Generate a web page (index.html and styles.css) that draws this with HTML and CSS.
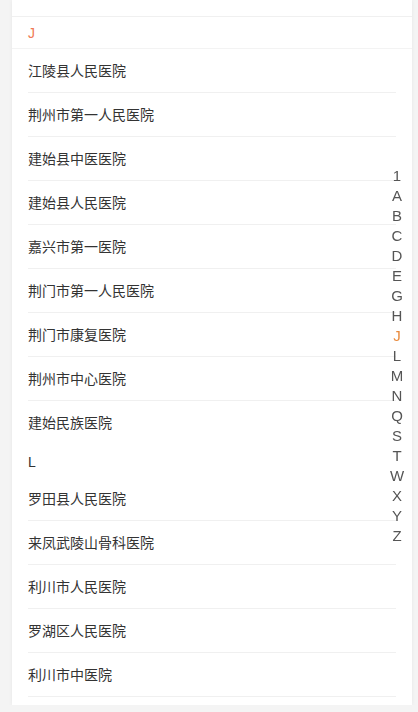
FILE: index.html
```html
<!DOCTYPE html>
<html lang="zh-CN">
<head>
    <meta charset="UTF-8">
    <meta name="viewport" content="width=device-width, initial-scale=1.0">
    <title>选择医院</title>
    <link rel="stylesheet" href="styles.css">
</head>
<body>

    <div class="card">
        <!-- tail of the previous group, scrolled away -->
        <div class="cut-row"><span>H</span></div>

        <div class="group-title active">J</div>
        <div class="item">江陵县人民医院</div>
        <div class="item">荆州市第一人民医院</div>
        <div class="item">建始县中医医院</div>
        <div class="item">建始县人民医院</div>
        <div class="item">嘉兴市第一医院</div>
        <div class="item">荆门市第一人民医院</div>
        <div class="item">荆门市康复医院</div>
        <div class="item">荆州市中心医院</div>
        <div class="item last">建始民族医院</div>

        <div class="group-title">L</div>
        <div class="item">罗田县人民医院</div>
        <div class="item">来凤武陵山骨科医院</div>
        <div class="item">利川市人民医院</div>
        <div class="item">罗湖区人民医院</div>
        <div class="item">利川市中医院</div>
    </div>

    <ul class="index-bar">
        <li>1</li>
        <li>A</li>
        <li>B</li>
        <li>C</li>
        <li>D</li>
        <li>E</li>
        <li>G</li>
        <li>H</li>
        <li class="active">J</li>
        <li>L</li>
        <li>M</li>
        <li>N</li>
        <li>Q</li>
        <li>S</li>
        <li>T</li>
        <li>W</li>
        <li>X</li>
        <li>Y</li>
        <li>Z</li>
    </ul>

</body>
</html>
```

FILE: styles.css
```css
body {
    margin: 0;
    padding: 0;
    background: #f4f4f4;
    font-family: 'Liberation Sans', 'Noto Sans CJK SC', sans-serif;
    color: #333;
    font-size: 14px;
}

.card {
    margin: 0 6px 0 12px;
    padding-bottom: 8px;
    background: #fff;
    box-shadow: 0 0 4px rgba(0, 0, 0, 0.06);
}

.cut-row {
    height: 16px;
    overflow: hidden;
    padding: 0 16px;
    border-bottom: 1px solid #f0f0f0;
}

.cut-row span {
    display: block;
    line-height: 20px;
    margin-top: -15px;
    color: #bbb;
}

.group-title {
    height: 31px;
    padding: 1px 16px 0;
    line-height: 32px;
}

.group-title.active {
    height: 30px;
    line-height: 31px;
    color: #f07a55;
    border-bottom: 1px solid #f3f3f3;
}

.item {
    height: 42px;
    padding-top: 1px;
    line-height: 43px;
    margin: 0 16px;
    border-bottom: 1px solid #f0f0f0;
}

.item.last {
    border-bottom-color: transparent;
}

.index-bar {
    position: fixed;
    right: 11px;
    top: 50%;
    transform: translateY(-50%);
    margin: 0;
    padding: 0;
    list-style: none;
    width: 20px;
    text-align: center;
    font-size: 15px;
    color: #555;
}

.index-bar li {
    line-height: 20px;
}

.index-bar li.active {
    color: #e98a3c;
}
```
